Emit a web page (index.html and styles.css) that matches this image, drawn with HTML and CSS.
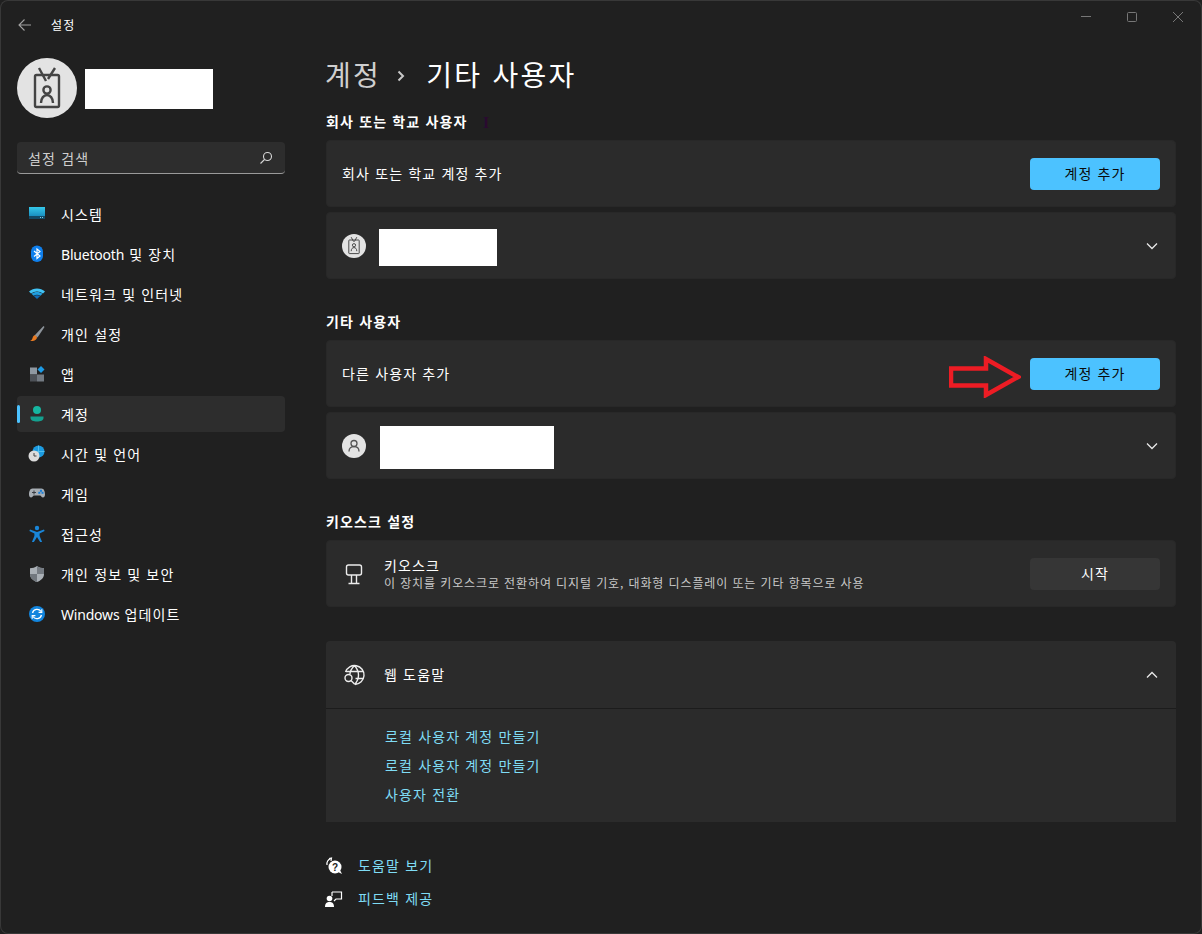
FILE: index.html
```html
<!DOCTYPE html>
<html lang="ko">
<head>
<meta charset="utf-8">
<title>설정</title>
<link rel="stylesheet" href="styles.css">
</head>
<body>
<div class="window">
  <div class="controls">
    <svg class="ctl" viewBox="0 0 46 32"><path d="M18 16.500h10"/></svg>
    <svg class="ctl" viewBox="0 0 46 32"><rect x="18.500" y="12.500" width="9" height="9" rx="1"/></svg>
    <svg class="ctl" viewBox="0 0 46 32"><path d="M18 12l10 10M28 12l-10 10"/></svg>
  </div>
  <aside class="sidebar">
    <div class="titlebar">
      <svg class="back" viewBox="0 0 14 14"><path d="M13 7H1.500M6.500 1.500L1 7l5.500 5.500"/></svg>
      <span class="apptitle">설정</span>
    </div>
    <div class="profile">
      <div class="avatar">
        <svg viewBox="0 0 60 60" class="badge-icon">
          <path d="M22 10l7 13M38 10l-7 11" class="b-line"/>
          <rect x="18" y="17" width="24" height="32" rx="1.500" class="b-line"/>
          <circle cx="30" cy="32" r="3.600" class="b-line"/>
          <path d="M24 45c0-5 3-8 6-8s6 3 6 8" class="b-line"/>
        </svg>
      </div>
      <div class="redact name-redact"></div>
    </div>
    <div class="search">
      <span>설정 검색</span>
      <svg viewBox="0 0 14 14" class="search-icon"><circle cx="8.500" cy="5.500" r="4"/><path d="M5.500 8.500L1.500 12.500"/></svg>
    </div>
    <nav class="nav">
      <a class="nav-item"><svg viewBox="0 0 18 18" class="nav-icon"><defs><linearGradient id="g1" x1="0" y1="0" x2="0" y2="1"><stop offset="0" stop-color="#35c8ea"/><stop offset="1" stop-color="#1a8fc0"/></linearGradient></defs><rect x="1" y="2" width="16" height="9" fill="url(#g1)"/><rect x="1" y="11" width="16" height="3" fill="#134a66"/><rect x="12" y="12" width="1" height="1" fill="#7fd0ea"/><rect x="14" y="12" width="1" height="1" fill="#7fd0ea"/></svg><span>시스템</span></a>
      <a class="nav-item"><svg viewBox="0 0 18 18" class="nav-icon"><rect x="3" y="0.500" width="12" height="16.500" rx="6" fill="#0f7fec"/><path d="M6 6l6 5-3 2.500V4l3 2.500-6 5" fill="none" stroke="#fff" stroke-width="1.200"/></svg><span><span class="latin">Bluetooth</span> 및 장치</span></a>
      <a class="nav-item"><svg viewBox="0 0 18 18" class="nav-icon"><path d="M1 6.500C5.500 2.500 12.500 2.500 17 6.500L15 8.500C11.500 5.800 6.500 5.800 3 8.500Z" fill="#41c3f5"/><path d="M3.500 8.800C6.500 6.500 11.500 6.500 14.500 8.800L12.500 10.800C10.500 9.500 7.500 9.500 5.500 10.800Z" fill="#1f9fe0"/><path d="M5.800 11C7.800 9.900 10.200 9.900 12.200 11L9 14Z" fill="#0f6cb8"/></svg><span>네트워크 및 인터넷</span></a>
      <a class="nav-item"><svg viewBox="0 0 18 18" class="nav-icon"><path d="M6.500 10.500L15.500 1l1 1-7 10.500Z" fill="#8d949b"/><path d="M2 16c2 .2 6 0 7-3 .3-1-2-3.200-3-2.500C4 12 5 15 2 16Z" fill="#e87a22"/></svg><span>개인 설정</span></a>
      <a class="nav-item"><svg viewBox="0 0 18 18" class="nav-icon"><rect x="2" y="2.500" width="7" height="7" fill="#8f98a1"/><rect x="2" y="9.500" width="7" height="7" fill="#4d5157"/><rect x="9" y="9.500" width="7" height="7" fill="#737a82"/><path d="M13 1l3.500 3.500L13 8 9.500 4.500Z" fill="#1c9be6"/></svg><span>앱</span></a>
      <a class="nav-item active"><svg viewBox="0 0 18 18" class="nav-icon"><circle cx="9" cy="5" r="4" fill="#16b6a1"/><path d="M2.500 11.500h13v1.500c0 2.500-3 3.500-6.500 3.500S2.500 15.500 2.500 13Z" fill="#14a08f"/></svg><span>계정</span></a>
      <a class="nav-item"><svg viewBox="0 0 18 18" class="nav-icon"><circle cx="10.500" cy="6.500" r="6" fill="#1c9be0"/><path d="M10.500 .5v12M4.500 6.500h12" stroke="#61c7ef" stroke-width=".8"/><circle cx="6" cy="11" r="5.500" fill="#dcdcdc"/><path d="M6 8v3h2.500" fill="none" stroke="#444" stroke-width="1"/></svg><span>시간 및 언어</span></a>
      <a class="nav-item"><svg viewBox="0 0 18 18" class="nav-icon"><path d="M4.500 3.500h9c2.500 0 3.500 3 3.500 6 0 2-1 3-2 3-1.500 0-2-2-3-2H6c-1 0-1.500 2-3 2-1 0-2-1-2-3 0-3 1-6 3.500-6Z" fill="#a8aeb4"/><path d="M4 7.500h4M6 5.500v4" stroke="#3b3f44" stroke-width="1"/><rect x="12" y="4.800" width="2" height="2" fill="#1c80d8"/><rect x="10.300" y="6.800" width="2" height="2" fill="#1c80d8"/><rect x="13.500" y="6.800" width="2" height="2" fill="#1c80d8"/></svg><span>게임</span></a>
      <a class="nav-item"><svg viewBox="0 0 18 18" class="nav-icon"><circle cx="9" cy="3" r="2.200" fill="#1a86d8"/><path d="M2 4.500l7 2.500 7-2.500.6 1.500-5 2.500v2.500l2.500 6h-2L9 12l-3.100 5h-2l2.500-6V8.500l-5-2.500Z" fill="#1a86d8"/></svg><span>접근성</span></a>
      <a class="nav-item"><svg viewBox="0 0 18 18" class="nav-icon"><path d="M9 1c2 1.500 4.500 2.200 7 2.300V9c0 4-3 6.500-7 8-4-1.500-7-4-7-8V3.300C4.500 3.200 7 2.500 9 1Z" fill="#aab0b6"/><path d="M9 1c2 1.500 4.500 2.200 7 2.300V9H9Z" fill="#767c83"/><path d="M2 9h7v8c-4-1.500-7-4-7-8Z" fill="#71777e"/></svg><span>개인 정보 및 보안</span></a>
      <a class="nav-item"><svg viewBox="0 0 18 18" class="nav-icon"><circle cx="9" cy="9" r="8" fill="#1285de"/><path d="M4.500 8A4.700 4.700 0 0 1 13 6.500M13.500 10A4.700 4.700 0 0 1 5 11.500" fill="none" stroke="#fff" stroke-width="1.300"/><path d="M13.800 4.200v3.200h-3.200M4.200 13.800v-3.200h3.200" fill="none" stroke="#fff" stroke-width="1.100"/></svg><span><span class="latin">Windows</span> 업데이트</span></a>
    </nav>
  </aside>
  <main class="main">
    <h1 class="crumb"><span class="crumb-parent">계정</span><svg class="crumb-sep" viewBox="0 0 10 12"><path d="M2.500 1.500L7 6l-4.500 4.500"/></svg><span>기타 사용자</span></h1>

    <section class="group first">
      <h2 class="group-title">회사 또는 학교 사용자<span class="cursor">I</span></h2>
      <div class="card"><span class="label">회사 또는 학교 계정 추가</span><button class="btn primary">계정 추가</button></div>
      <div class="card">
        <div class="person">
          <div class="mini-avatar"><svg viewBox="0 0 60 60" class="badge-icon"><path d="M23 8l6 11M37 8l-6 11" class="b-line"/><rect x="17" y="15" width="26" height="34" rx="1.500" class="b-line"/><circle cx="30" cy="28" r="4" class="b-line"/><path d="M23 43c0-6 3-9 7-9s7 3 7 9" class="b-line"/></svg></div>
          <div class="redact r1"></div>
        </div>
        <svg class="chev" viewBox="0 0 12 8"><path d="M1 1.500L6 6.500l5-5"/></svg>
      </div>
    </section>

    <section class="group">
      <h2 class="group-title">기타 사용자</h2>
      <div class="card arrow-host">
        <span class="label">다른 사용자 추가</span>
        <button class="btn primary">계정 추가</button>
        <svg class="red-arrow" viewBox="0 0 72 42"><path d="M2 12.500H37V3L69 21 37 39V29.500H2Z"/></svg>
      </div>
      <div class="card">
        <div class="person">
          <div class="mini-avatar"><svg viewBox="0 0 24 24" class="user-icon"><circle cx="12" cy="9.500" r="3"/><path d="M7 17.500c0-3.500 2.200-4.800 5-4.800s5 1.300 5 4.800"/></svg></div>
          <div class="redact r2"></div>
        </div>
        <svg class="chev" viewBox="0 0 12 8"><path d="M1 1.500L6 6.500l5-5"/></svg>
      </div>
    </section>

    <section class="group">
      <h2 class="group-title">키오스크 설정</h2>
      <div class="card">
        <div class="with-icon">
          <svg class="row-icon" viewBox="0 0 22 22"><rect x="3.500" y="2" width="15" height="10" rx="2"/><path d="M8.500 12v8M13.500 12v8M5.500 20.500h11"/></svg>
          <div class="stack"><span class="stack-title">키오스크</span><span class="stack-sub">이 장치를 키오스크로 전환하여 디지털 기호, 대화형 디스플레이 또는 기타 항목으로 사용</span></div>
        </div>
        <button class="btn">시작</button>
      </div>
    </section>

    <section class="help">
      <div class="help-head">
        <div class="with-icon">
          <svg class="row-icon" viewBox="0 0 22 22"><path d="M2.500 8A9.500 9.500 0 1 1 12 20.500M2.500 7.500H20.500M12.500 14.500H20.500M11.500 1.500C8 5 7 7 7 10M11.500 1.500C14.500 5 15.500 8 15.500 11S14.500 17.500 11.500 20.500"/><circle cx="5.500" cy="14" r="3.500"/><path d="M8 16.500l3.500 3.500"/></svg>
          <span class="label">웹 도움말</span>
        </div>
        <svg class="chev" viewBox="0 0 12 8"><path d="M1 6.500L6 1.500l5 5"/></svg>
      </div>
      <div class="help-links">
        <a class="link">로컬 사용자 계정 만들기</a>
        <a class="link">로컬 사용자 계정 만들기</a>
        <a class="link">사용자 전환</a>
      </div>
    </section>

    <div class="footer-links">
      <a class="foot"><svg viewBox="0 0 18 18" class="foot-icon"><path d="M2 8a6 6 0 0 1 4-6.500" class="foot-stroke"/><path d="M4 1.500L6.500 1 6 4" class="foot-stroke"/><circle cx="10" cy="10" r="6.500" fill="#fff"/><path d="M13 15l4 2-2-4Z" fill="#fff"/><text x="10" y="13.500" class="q">?</text></svg><span class="label">도움말 보기</span></a>
      <a class="foot"><svg viewBox="0 0 18 18" class="foot-icon"><circle cx="4.500" cy="8.500" r="2.800" fill="#fff"/><path d="M0 17c0-4 2-5 4.500-5S9 13 9 17Z" fill="#fff"/><path d="M7 2h9.500v7H11l-2 2" class="foot-stroke"/><path d="M7 2v4" class="foot-stroke"/></svg><span class="label">피드백 제공</span></a>
    </div>
  </main>
</div>
</body>
</html>
```
FILE: styles.css
```css
* { box-sizing: border-box; }
html, body { margin: 0; height: 100%; background: #202020; }
body { font-family: "Noto Sans CJK KR", "Noto Sans", sans-serif; font-size: 14px; color: #fff; letter-spacing: 1.150px; }
.latin { font-family: "Noto Sans", sans-serif; letter-spacing: -.2px; }
.window { position: relative; width: 1202px; height: 934px; background: #202020; display: flex; border-radius: 8px; box-shadow: inset 0 0 0 1px #383838; overflow: hidden; }
.controls { position: absolute; top: 0; right: 0; display: flex; padding-right: 1px; }
.ctl { width: 46px; height: 32px; fill: none; stroke: #777; stroke-width: 1; }
.sidebar { width: 302px; flex: none; padding-left: 17px; padding-right: 17px; display: flex; flex-direction: column; }
.titlebar { height: 50px; display: flex; align-items: center; }
.back { width: 14px; height: 14px; margin-left: 1px; fill: none; stroke: #a0a0a0; stroke-width: 1.100; }
.apptitle { font-size: 12px; margin-left: 19px; line-height: 16px; }
.profile { display: flex; align-items: center; margin-top: 8px; height: 60px; gap: 8px; }
.avatar { width: 60px; height: 60px; border-radius: 50%; background: #e3e3e3; flex: none; }
.badge-icon { width: 100%; height: 100%; display: block; }
.b-line { fill: none; stroke: #444; stroke-width: 2.400; }
.redact { background: #fff; }
.name-redact { width: 128px; height: 40px; margin-top: 2px; }
.search { margin-top: 24px; height: 32px; background: #2d2d2d; border-radius: 4px; border-bottom: 1px solid #9a9a9a; display: flex; align-items: center; justify-content: space-between; padding: 0 12px 0 11px; color: #cfcfcf; }
.search span { line-height: 20px; }
.search-icon { width: 14px; height: 14px; fill: none; stroke: #d8d8d8; stroke-width: 1.100; }
.nav { margin-top: 22px; display: flex; flex-direction: column; gap: 4px; }
.nav-item { position: relative; height: 36px; display: flex; align-items: center; padding-left: 11px; gap: 15px; border-radius: 4px; line-height: 20px; }
.nav-item.active { background: #2d2d2d; }
.nav-item.active::before { content: ""; position: absolute; left: 0; top: 9px; width: 3px; height: 18px; border-radius: 2px; background: #4cc2ff; }
.nav-icon { width: 18px; height: 18px; flex: none; }
.main { flex: 1; padding-left: 24px; padding-right: 26px; padding-top: 55px; display: flex; flex-direction: column; min-width: 0; }
.crumb { margin: 0; height: 40px; display: flex; align-items: center; font-size: 28px; font-weight: 400; line-height: 38px; letter-spacing: 2.300px; padding-bottom: 2px; color: #fff; }
.crumb-parent { color: #cfcfcf; margin-left: -1px; }
.crumb-sep { width: 10px; height: 12px; margin: 3px 20px 0 15px; fill: none; stroke: #c8c8c8; stroke-width: 2; }
.group { margin-top: 33px; }
.group.first { margin-top: 17px; }
.group-title { position: relative; margin: 0 0 8px; font-size: 14px; height: 20px; line-height: 18px; font-weight: 700; }
.cursor { position: absolute; left: 157px; top: 1px; font-family: "Liberation Serif", serif; font-size: 16px; line-height: 20px; font-weight: 700; color: #2a0a30; }
.card { position: relative; height: 67px; background: #2b2b2b; border-radius: 4px; border: 1px solid #282828; display: flex; align-items: center; justify-content: space-between; padding: 0 15px; margin-bottom: 5px; }
.group .card:last-child { margin-bottom: 0; }
.label { line-height: 20px; padding-bottom: 2px; }
.btn { width: 130px; height: 32px; border: 0; border-radius: 4px; font: inherit; letter-spacing: 1.150px; color: #fff; background: #363636; line-height: 20px; padding: 0 0 2px; }
.btn.primary { background: #4cc2ff; color: #0a0a0a; }
.person { display: flex; align-items: center; gap: 13px; }
.mini-avatar { width: 24px; height: 24px; border-radius: 50%; background: #e3e3e3; flex: none; }
.user-icon { width: 24px; height: 24px; display: block; fill: none; stroke: #555; stroke-width: 1.300; }
.r1 { width: 118px; height: 37px; margin-top: 4px; }
.r2 { width: 174px; height: 43px; margin-top: 4px; margin-left: 1px; }
.chev { width: 12px; height: 8px; margin-right: 2px; fill: none; stroke: #e8e8e8; stroke-width: 1.300; }
.red-arrow { position: absolute; left: 622px; top: 15px; width: 72px; height: 42px; fill: none; stroke: #ed1c24; stroke-width: 4.500; }
.with-icon { display: flex; align-items: center; gap: 19px; }
.row-icon { width: 22px; height: 22px; margin-left: 1px; flex: none; fill: none; stroke: #ececec; stroke-width: 1.400; }
.stack { display: flex; flex-direction: column; }
.stack-title { line-height: 18px; padding-bottom: 1px; box-sizing: content-box; }
.stack-sub { font-size: 12px; line-height: 16px; letter-spacing: .89px; color: #c8c8c8; }
.help { margin-top: 34px; background: #2b2b2b; border-radius: 4px 4px 0 0; height: 181px; }
.help-head { height: 68px; display: flex; align-items: center; justify-content: space-between; padding: 0 16px; border-bottom: 1px solid #1c1c1c; }
.help-links { display: flex; flex-direction: column; padding: 14px 0 0 59px; }
.link { height: 29px; line-height: 27px; color: #7fdcf5; }
.footer-links { margin-top: 27px; display: flex; flex-direction: column; }
.foot { height: 33px; display: flex; align-items: center; gap: 15px; color: #7fdcf5; line-height: 20px; }
.foot-icon { width: 18px; height: 18px; flex: none; margin-left: -1px; }
.foot-stroke { fill: none; stroke: #fff; stroke-width: 1.200; }
.q { font-family: "Liberation Sans", sans-serif; font-size: 10px; font-weight: 700; text-anchor: middle; fill: #222; letter-spacing: 0; }
```
